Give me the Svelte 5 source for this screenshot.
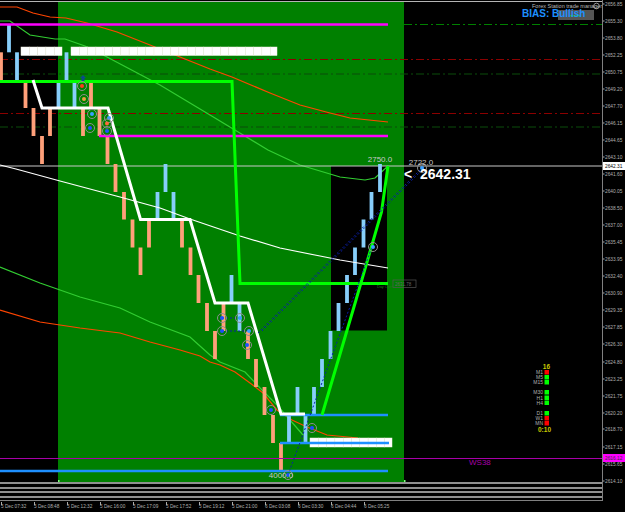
<script>
	// renko price levels, top to bottom
	const lv = [24.5, 52.3, 80, 108, 136, 164, 192, 219.5, 247.5, 275, 303, 331, 359, 387, 415, 443, 470.5];

	// [x, top level index, colour]
	const bars = [
		[1, 1, 'o'], [9, 0, 'b'], [17, 1, 'b'], [25.5, 2, 'o'], [33.5, 3, 'o'], [42, 4, 'o'], [50, 3, 'o'],
		[58.5, 2, 'b'], [66.5, 1, 'b'], [74.5, 2, 'b'], [83, 3, 'o'], [91, 2, 'o'], [99.5, 3, 'o'],
		[107.5, 4, 'o'], [115.5, 5, 'o'], [124, 6, 'o'], [132.5, 7, 'o'], [140.5, 8, 'o'], [149, 7, 'o'],
		[157.5, 6, 'b'], [165.5, 5, 'b'], [173.5, 6, 'b'], [182, 7, 'o'], [190.5, 8, 'o'], [198.5, 9, 'o'],
		[207, 10, 'o'], [215, 11, 'o'], [223.5, 10, 'o'], [231.5, 9, 'b'], [239.5, 10, 'b'], [248, 11, 'o'],
		[256, 12, 'o'], [264.5, 13, 'o'], [273, 14, 'o'], [281, 15, 'o'], [289, 14, 'b'], [297.5, 13, 'b'],
		[305.5, 14, 'b'], [314, 13, 'b'], [322, 12, 'b'], [330.5, 11, 'b'], [338.5, 10, 'b'], [347, 9, 'b'],
		[355, 8, 'b'], [363.5, 7, 'b'], [371.5, 6, 'b'], [380, 5, 'b']
	];

	const redTop = '0,7 17,7 33,13 50,17 66,18 87,23 117,32 150,45 180,57 210,69 232,77 270,93 300,105 330,113 350,118 388,122';
	const redLow = '0,310 40,322 80,328 120,333 150,342 180,350 200,356 210,362 220,365 235,372 250,383 263,393 277,410 292,420 307,427 327,435 358,438';
	const greenTop = '0,21 10,21 30,35 55,39 65,39 85,46 107,57 160,85 210,115 268,150 300,165 320,171 340,177 365,180 375,178 388,166';
	const greenLow = '0,267 40,283 80,297 120,308 150,322 190,337 210,355 220,362 245,372 262,390 277,405 303,435';
	const whiteCurve = '0,165 16,169 60,181 120,197 160,208 190,219 240,236 280,248 320,256 340,260 388,268';

	const priceTicks = [
		['2656.85', 4], ['2655.30', 21], ['2653.80', 38], ['2652.25', 55], ['2650.75', 72], ['2649.20', 89],
		['2647.70', 106], ['2646.15', 123], ['2644.65', 140], ['2643.10', 157], ['2641.60', 174], ['2640.05', 191],
		['2638.50', 208], ['2637.00', 225], ['2635.45', 242], ['2633.95', 259], ['2632.40', 276], ['2630.90', 293],
		['2629.35', 310], ['2627.85', 327], ['2626.30', 344], ['2624.80', 362], ['2623.25', 379], ['2621.75', 396],
		['2620.20', 413], ['2618.70', 429], ['2617.15', 447], ['2615.65', 464], ['2614.10', 481]
	];

	const timeTicks = [
		'5 Dec 07:32', '5 Dec 08:48', '5 Dec 12:32', '5 Dec 16:00', '5 Dec 17:09', '5 Dec 17:52',
		'5 Dec 19:12', '5 Dec 21:00', '6 Dec 03:08', '6 Dec 03:30', '6 Dec 04:44', '6 Dec 05:25'
	];

	// circled trade markers [x, y, dot colour]
	const marks = [
		[82, 86, '#ff3b1f'], [84, 99, '#e8a040'], [92, 114, '#3aa0ff'], [90, 128, '#1e50ff'],
		[109, 118, '#3aa0ff'], [107, 123.5, '#ff6a3a'], [107, 131, '#1e50ff'],
		[222, 318, '#1e50ff'], [240, 318, '#3aa0ff'], [222, 331, '#1e50ff'], [249, 331, '#3aa0ff'],
		[247, 345, '#1e50ff'], [271, 410, '#1e50ff'], [312, 428, '#1e50ff'], [288, 475, '#1e50ff'],
		[373, 247, '#3aa0ff'], [422, 168, '#3aa0ff']
	];

	const frames = [
		['M1', 372, 'r'], ['M5', 377, 'g'], ['M15', 382, 'g'],
		['M30', 392, 'g'], ['H1', 397.5, 'g'], ['H4', 402.5, 'g'],
		['D1', 413, 'g'], ['W1', 418, 'r'], ['MN', 423, 'r']
	];

	const dashLines = [[59.5, '#8b0000'], [74, '#0b4d0b'], [113.5, '#8b0000'], [127, '#0b4d0b']];

	// [x, width] cells of a white band, clipped to its right edge
	const cells = (x0, x1) => {
		const out = [];
		for (let x = x0; x < x1; x += 8.3) out.push([x, Math.min(8.3, x1 - x)]);
		return out;
	};
</script>

<div class="terminal">
	<svg class="plot" width="602" height="482" viewBox="0 0 602 482">
		<rect x="58" y="2" width="346" height="480" fill="#008000" />
		<rect x="331" y="166" width="56" height="164.5" fill="#000" />

		<line x1="404" x2="602" y1="24.5" y2="24.5" class="dash" stroke="#008000" />
		{#each dashLines as [y, c]}
			<line x1="0" x2="602" y1={y} y2={y} class="dash" stroke={c} />
		{/each}

		<polyline points={redTop} class="curve" stroke="#ff4500" />
		<polyline points={redLow} class="curve" stroke="#ff4500" />
		<polyline points={greenTop} class="curve" stroke="#32cd32" />
		<polyline points={greenLow} class="curve" stroke="#32cd32" />

		<line x1="0" x2="602" y1="166" y2="166" stroke="#c8c8c8" />

		{#each bars as [x, i, c]}
			<rect x={x - 1.9} y={lv[i]} width="3.8" height={lv[i + 1] - lv[i]} fill={c === 'o' ? '#ffa07a' : '#87cefa'} />
		{/each}

		<polyline points={whiteCurve} class="curve" stroke="#fff" />

		<line x1="0" x2="388" y1="24.5" y2="24.5" class="lvl" stroke="#ff00ff" />
		<line x1="99" x2="388" y1="136" y2="136" class="lvl" stroke="#ff00ff" />

		{#each [...cells(21, 62), ...cells(71, 277)] as [x, w]}
			<rect x={x} y="47" width={w} height="8.5" fill="#fff" stroke="#f2f0e2" stroke-width="0.5" />
		{/each}
		{#each cells(310, 392) as [x, w]}
			<rect x={x} y="438" width={w} height="9" fill="#fff" stroke="#f2f0e2" stroke-width="0.5" />
		{/each}

		<line x1="280" x2="388" y1="415" y2="415" class="lvl" stroke="#1e90ff" />
		<line x1="280" x2="389" y1="443" y2="443" class="lvl" stroke="#1e90ff" />
		<line x1="0" x2="388" y1="471" y2="471" class="lvl" stroke="#1e90ff" />
		<line x1="0" x2="602" y1="458.5" y2="458.5" stroke="#a800a8" />

		<polyline points="0,81.5 232,81.5 240,283.5 388,283.5" class="trend" stroke="#00ff00" />
		<polyline points="322,415 356,300 381.5,212 388,166" class="trend" stroke="#00ff00" />
		<polyline points="33,80 42,108 108,108 140.5,219.5 190,219.5 215,303 248,303 281,414 305,414" class="trend" stroke="#fff" />

		<line x1="258" y1="333" x2="420" y2="170" class="dots" />
		<line x1="262" y1="331" x2="424" y2="168" class="dots" />
		<line x1="288" y1="475" x2="372" y2="247" class="dots" />
		<line x1="222" y1="318" x2="240" y2="318" class="dots" />
		<line x1="222" y1="331" x2="247" y2="331" class="dots" />

		{#each marks as [x, y, c]}
			<circle cx={x} cy={y} r="4.5" class="ring" />
			<circle cx={x} cy={y} r="2" fill={c} />
		{/each}
		<path d="M83 75 l3 3 h-1.5 v3 h-3 v-3 h-1.5 z" fill="#0a4a8a" />

		<rect x="0" y="1" width="602" height="1" fill="#b4b4b4" />
		<rect x="58" y="480" width="1.5" height="2" fill="#7cff7c" />
		<rect x="404" y="480" width="1.5" height="2" fill="#7cff7c" />

		<text x="380" y="162" class="lbl" text-anchor="middle">2750.0</text>
		<text x="421" y="165" class="lbl" text-anchor="middle">2722.0</text>
		<text x="281" y="478" class="lbl" text-anchor="middle">4000.0</text>
		<text y="179" class="price"><tspan x="404">&lt;</tspan><tspan x="420">2642.31</tspan></text>
		<text x="469" y="465" class="ws">WS38</text>
		<rect x="393" y="280" width="23" height="7.5" fill="none" stroke="#555" stroke-width="0.7" />
		<text x="395" y="286" class="small" fill="#666">2631.78</text>
		<text x="377" y="288" class="micro" fill="#1f7a1f">Day Open</text>

		<rect x="558" y="10" width="36" height="10" fill="#555" />
		<rect x="570" y="15" width="10" height="1.5" fill="#2fae2f" />
		<text x="532" y="8" class="tiny" fill="#b8b8b8">Forex Station trade manager</text>
		<circle cx="596.5" cy="6" r="2.8" fill="none" stroke="#b8b8b8" stroke-width="0.8" />
		<text x="522" y="16.5" class="bias">BIAS: Bullish</text>

		<text x="550" y="369" class="tf-count" text-anchor="end">16</text>
		{#each frames as [name, y, c]}
			<text x="543" y={y + 2} class="tf-name" text-anchor="end">{name}</text>
			<rect x="544.5" y={y - 2} width="4.5" height="4.5" fill={c === 'r' ? '#ff0000' : '#00ff00'} />
		{/each}
		<text x="551" y="432" class="tf-count" text-anchor="end">0:10</text>
	</svg>

	<svg class="axis" width="23" height="501" viewBox="0 0 23 501">
		<rect x="0" y="0" width="1" height="501" fill="#808080" />
		{#each priceTicks as [p, y]}
			<line x1="1" x2="2.5" y1={y} y2={y} stroke="#aaa" />
			<text x="3" y={y + 2} class="tick">{p}</text>
		{/each}
		<rect x="1" y="162" width="22" height="8" fill="#fff" />
		<text x="3" y="168" class="tag" fill="#000">2642.31</text>
		<rect x="1" y="454" width="22" height="8" fill="#ff00ff" />
		<text x="3" y="460" class="tag" fill="#333">2616.12</text>
	</svg>

	<div class="stripes">
		<span></span><span></span><span></span><span></span>
	</div>

	<div class="times">
		{#each timeTicks as t}
			<span class="time">{t}</span>
		{/each}
	</div>
</div>

<style>
	:global(body) {
		background: #000;
		margin: 0;
	}

	.terminal {
		width: 625px;
		height: 512px;
		background: #000;
		display: grid;
		grid-template-columns: 602px 23px;
		grid-template-rows: 482px 19px 11px;
		overflow: hidden;
		font-family: 'Liberation Sans', Arial, sans-serif;
	}

	.plot {
		grid-column: 1;
		grid-row: 1;
		display: block;
	}

	.axis {
		grid-column: 2;
		grid-row: 1 / 3;
		display: block;
	}

	.stripes {
		grid-column: 1;
		grid-row: 2;
		display: flex;
		flex-direction: column;
		gap: 2.5px;
		border-bottom: 1px solid #808080;
	}

	.stripes span {
		display: block;
		height: 2px;
		background: #909090;
	}

	.times {
		grid-column: 1 / 3;
		grid-row: 3;
		display: flex;
		padding-left: 1px;
	}

	.time {
		width: 33px;
		flex: none;
		font-size: 4.7px;
		line-height: 12px;
		color: #b0b0b0;
		white-space: nowrap;
		background: linear-gradient(#aaa, #aaa) 0 1px / 1px 3px no-repeat;
	}

	.curve {
		fill: none;
		stroke-width: 1.2;
	}

	.trend {
		fill: none;
		stroke-width: 3;
	}

	.lvl {
		stroke-width: 2.5;
	}

	.dash {
		stroke-width: 1;
		stroke-dasharray: 8 3 2 3;
	}

	.dots {
		stroke: #0a1ea8;
		stroke-width: 1;
		stroke-dasharray: 2 2;
	}

	.ring {
		fill: none;
		stroke: #8f8f8f;
		stroke-width: 1;
	}

	.lbl {
		font-size: 8px;
		fill: #c8c8c8;
	}

	.price {
		font-size: 14px;
		font-weight: 700;
		fill: #fff;
	}

	.ws {
		font-size: 8px;
		fill: #a800a8;
	}

	.tiny {
		font-size: 5.5px;
	}

	.small {
		font-size: 4.5px;
	}

	.micro {
		font-size: 3.8px;
	}

	.bias {
		font-size: 10px;
		font-weight: 700;
		fill: #1e90ff;
	}

	.tf-name {
		font-size: 5px;
		fill: #b0b0b0;
	}

	.tf-count {
		font-size: 6.5px;
		font-weight: 700;
		fill: #c8c800;
	}

	.tick {
		font-size: 4.8px;
		fill: #b0b0b0;
	}

	.tag {
		font-size: 4.8px;
	}
</style>
